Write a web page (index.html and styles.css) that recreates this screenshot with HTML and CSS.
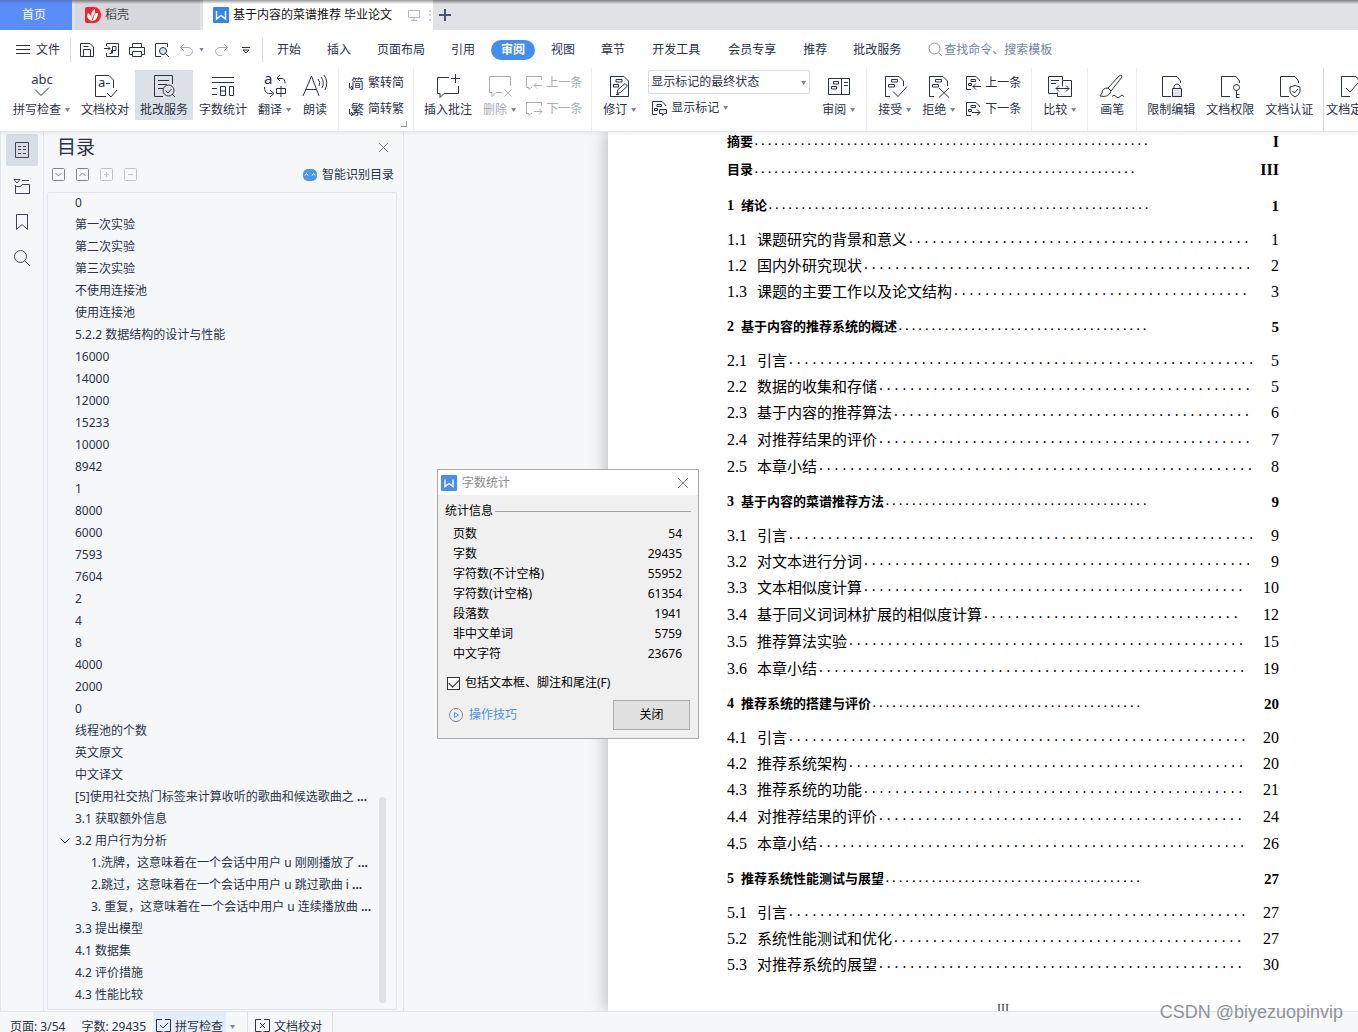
FILE: index.html
```html
<!DOCTYPE html>
<html lang="zh-CN">
<head>
<meta charset="utf-8">
<title>基于内容的菜谱推荐 毕业论文</title>
<link rel="stylesheet" href="styles.css">
</head>
<body>
<svg class="defs" aria-hidden="true">
  <symbol id="i-change" viewBox="0 0 16 16"><path d="M6 14.500H1.500V1.500H11L14.500 5V6M6 4.500h4.500v2H6zM3.500 8.500h3v2h-3z"/></symbol>
  <symbol id="i-bigchange" viewBox="0 0 24 24"><path d="M8 22.500H3.500V2.500H17L21.500 7V12M9.500 5.500h6v2.500h-6zM6.500 10.500h6v2.500h-6z"/></symbol>
  <symbol id="i-page" viewBox="0 0 24 24"><path d="M12 22.500H3.500V2.500H18L21.500 7V9"/></symbol>
</svg>

<header class="tabs">
  <button class="tab tab-home">首页</button>
  <button class="tab tab-docer"><svg width="16" height="16" viewBox="0 0 16 16"><path d="M2 0h7a7 8 0 0 1 0 16H2q-2 0-2-2V2Q0 0 2 0z" fill="#f5222d"/><path d="M7 14C1 12 2 8 3 6c2 1 3 3 4 5C5 6 8 3 10 2c0 2 0 4-1 6 1-2 2-2 4-2 0 4-2 8-6 8z" fill="#fff"/><path d="M7.500 13Q8 9 9.500 7.500" fill="none" stroke="#f5222d"/></svg>稻壳</button>
  <button class="tab tab-doc"><svg width="16" height="16" viewBox="0 0 16 16"><rect width="16" height="16" rx="1" fill="#3385f5"/><path d="M3.500 4v8L8 8.500l4.500 3.500V4" fill="none" stroke="#fff" stroke-width="1.400"/></svg><span class="doc-name">基于内容的菜谱推荐 毕业论文</span><svg class="line pale" width="12" height="12" viewBox="0 0 12 12"><path d="M.5 1.500h11v7H.5zM6 8.500v3M3 11.500h6"/></svg><span class="tab-dots">⋮</span></button>
  <button class="add" aria-label="新建"><svg width="12" height="12" viewBox="0 0 12 12"><path d="M6 0v12M0 6h12" stroke="#46536b" stroke-width="2"/></svg></button>
</header>

<div class="menubar">
  <button class="file"><svg class="line" width="14" height="12" viewBox="0 0 14 12"><path d="M0 1.500h14M0 5.500h14M0 9.500h14"/></svg>文件</button>
  <div class="quick">
    <button aria-label="保存"><svg class="line" width="16" height="16" viewBox="0 0 16 16"><path d="M1.500 1.500H11L14.500 5V14.500H1.500zM4.500 14V7.500h7V14M4.500 4.500h5"/></svg></button>
    <button aria-label="输出为PDF"><svg class="line" width="16" height="16" viewBox="0 0 16 16"><path d="M2.500 4V1.500h12v13h-12V11M0 6.500h6M4 4.500l2 2-2 2M8.500 4.500H12v4H7.500v3H5.500M8.500 4.500v7"/></svg></button>
    <button aria-label="打印"><svg class="line" width="16" height="16" viewBox="0 0 16 16"><path d="M3.500 5V1.500h9V5M3.500 12.500h-3v-7h15v7h-3M3.500 9.500h9v5h-9z"/></svg></button>
    <button aria-label="打印预览"><svg class="line" width="16" height="16" viewBox="0 0 16 16"><path d="M7 14.500H1.500V1.500h12V5"/><circle cx="9" cy="9" r="3.500" fill="#dfe3e8"/><path d="M12 12l3 3"/></svg></button>
    <button aria-label="撤销" class="off"><svg class="line" width="16" height="16" viewBox="0 0 16 16"><path d="M5 2L1.500 5.500 5 9M1.500 5.500H9C15 6 15 13 9 13.500H7"/></svg><i class="caret"></i></button>
    <button aria-label="恢复" class="off"><svg class="line" width="16" height="16" viewBox="0 0 16 16"><path d="M11 2l3.500 3.500L11 9M14.500 5.500H7C1 6 1 13 7 13.500h2"/></svg></button>
    <button aria-label="更多"><svg class="line" width="10" height="8" viewBox="0 0 10 8"><path d="M1 1.500h8M2 4l3 3 3-3z"/></svg></button>
  </div>
  <nav class="menu">
    <button>开始</button><button>插入</button><button>页面布局</button><button>引用</button><button class="current">审阅</button><button>视图</button><button>章节</button><button class="roomy">开发工具</button><button class="roomy">会员专享</button><button>推荐</button><button>批改服务</button>
  </nav>
  <label class="find"><svg class="line" width="15" height="15" viewBox="0 0 15 15"><circle cx="6.500" cy="6.500" r="5.500"/><path d="M10.500 10.500L14 14"/></svg><input type="text" placeholder="查找命令、搜索模板"></label>
</div>

<div class="ribbon">
  <div class="group tight">
    <button class="tool"><svg class="line" width="24" height="24" viewBox="0 0 24 24"><text x="12" y="10" text-anchor="middle" class="glyph">abc</text><path d="M5 15.500l6 6 8-8"/></svg><span>拼写检查<i class="caret"></i></span></button>
    <button class="tool"><svg class="line" width="24" height="24" viewBox="0 0 24 24"><path d="M13 22.500H2.500V1.500H16L20.500 6V14M13 9.500h4M14 19l4 4 6-7"/><text x="5" y="13" class="glyph">a</text></svg><span>文档校对</span></button>
    <button class="tool pressed"><svg class="line" width="24" height="24" viewBox="0 0 24 24"><path d="M11 22.500H2.500V1.500h18V10M6 6.500h11M6 10.500h9M6 14.500h5M13.500 16.500l2.500 2.500 3.500-4M20 20l3 3"/><circle cx="16.500" cy="16.500" r="5.500"/></svg><span>批改服务</span></button>
    <button class="tool"><svg class="line" width="24" height="24" viewBox="0 0 24 24"><path d="M1 3.500h22M1 8.500h22M1 14.500h5M1 20.500h5M9.500 12.500h5v9h-5zM18.500 12.500h4v9h-4zM9.500 17h5"/></svg><span>字数统计</span></button>
    <button class="tool"><svg class="line" width="24" height="24" viewBox="0 0 24 24"><text x="1" y="10" class="glyph big">a</text><path d="M17 1l-3 3 3 3M14 4.500h5q3 0 3 5M1.500 13q0 6 4 6.500h4M7 16l4 3.500L7 23M13.500 14.500h9v5h-9zM18 12v11"/></svg><span>翻译<i class="caret"></i></span></button>
    <button class="tool"><svg class="line" width="26" height="24" viewBox="0 0 26 24"><path d="M1 22L9.500 2 17 22M4 15.500h10M16 5q3 3 1 7M19 3q4 5 1 11M22 1q5 7 1 15"/></svg><span>朗读</span></button>
  </div>
  <div class="group tight corner">
    <div class="stack">
      <button class="mini"><svg class="line" width="16" height="16" viewBox="0 0 16 16"><text x="3" y="13" class="glyph">简</text><path d="M1.500 8v5H5M3 11l2 2-2 2"/></svg>繁转简</button>
      <button class="mini"><svg class="line" width="16" height="16" viewBox="0 0 16 16"><text x="3" y="13" class="glyph">繁</text><path d="M1.500 8v5H5M3 11l2 2-2 2"/></svg>简转繁</button>
    </div>
  </div>
  <div class="group tight">
    <button class="tool"><svg class="line" width="24" height="24" viewBox="0 0 24 24"><path d="M13 3.500H1.500v16H4v4l4-4h14.500V12M19.500 0v9M15 4.500h9"/></svg><span>插入批注</span></button>
    <button class="tool off"><svg class="line" width="24" height="24" viewBox="0 0 24 24"><path d="M14 18.500H8l-4 4v-4H1.500v-16h21V12M16.500 15.500l7 7M23.500 15.500l-7 7"/></svg><span>删除<i class="caret"></i></span></button>
    <div class="stack">
      <button class="mini off"><svg class="line" width="16" height="16" viewBox="0 0 16 16"><path d="M6 12.500H5l-2 2v-2H.5v-11h15V5M8 10.500h8M11 7.500l-3 3 3 3"/></svg>上一条</button>
      <button class="mini off"><svg class="line" width="16" height="16" viewBox="0 0 16 16"><path d="M6 12.500H5l-2 2v-2H.5v-11h15V5M8 10.500h8M13 7.500l3 3-3 3"/></svg>下一条</button>
    </div>
  </div>
  <div class="group">
    <button class="tool"><svg class="line" width="24" height="24" viewBox="0 0 24 24"><path d="M2.500 2.500H16L20.500 7V22.500h-18zM8 5.500h6V8H8zM5.500 10.500h5V13h-5zM9 19.500l1-4 7-6 2.500 2.500-7 6.500zM8 20.500h3"/></svg><span>修订<i class="caret"></i></span></button>
    <div class="stack markup">
      <label class="pick"><select aria-label="显示状态"><option>显示标记的最终状态</option></select><i class="caret"></i></label>
      <button class="mini"><svg class="line" width="16" height="16"><use href="#i-change"/><path d="M8.500 9.500h7v4h-2l-2 2v-2h-3z" fill="#dfe3e8"/></svg>显示标记<i class="caret"></i></button>
    </div>
    <button class="tool"><svg class="line" width="24" height="24" viewBox="0 0 24 24"><path d="M1.500 4.500h21v16h-21zM14.500 4.500v16M17 8.500h4M17 11.500h4M6.500 7.500h5V10h-5zM4.500 12.500h5V15h-5z"/></svg><span>审阅<i class="caret"></i></span></button>
  </div>
  <div class="group">
    <button class="tool"><svg class="line" width="26" height="24"><use href="#i-bigchange" width="24" height="24"/><path d="M11 17.500l5 5 9-10"/></svg><span>接受<i class="caret"></i></span></button>
    <button class="tool"><svg class="line" width="26" height="24"><use href="#i-bigchange" width="24" height="24"/><path d="M13 14l10 9.500M23 14l-10 9.500"/></svg><span>拒绝<i class="caret"></i></span></button>
    <div class="stack">
      <button class="mini"><svg class="line" width="16" height="16"><use href="#i-change"/><path d="M8 11.500h8M11 8.500l-3 3 3 3"/></svg>上一条</button>
      <button class="mini"><svg class="line" width="16" height="16"><use href="#i-change"/><path d="M7 11.500h8M12 8.500l3 3-3 3"/></svg>下一条</button>
    </div>
  </div>
  <div class="group">
    <button class="tool"><svg class="line" width="26" height="24" viewBox="0 0 26 24"><path d="M11 19.500H1.500v-17h14V6M4 6.500h8M4 9.500h5M15.500 6.500h9v16h-14v-4M15.500 6.500v6M9 14.500h13M12 11.500l-3 3 3 3M19 11.500l3 3-3 3"/></svg><span>比较<i class="caret"></i></span></button>
  </div>
  <div class="group">
    <button class="tool"><svg class="line" width="26" height="24" viewBox="0 0 26 24"><path d="M9 14L20 2q3-2 3 1L12 17M9 14l3 3M9 14q-6 0-6 5l-2 3q9 2 11-5M13 22.500q2-3 4 0t4 0 4 0"/></svg><span>画笔</span></button>
  </div>
  <div class="group tight">
    <button class="tool"><svg class="line" width="24" height="24"><use href="#i-page"/><path d="M13.500 14.500h9v8h-9z" fill="#dfe3e8"/><path d="M15 14v-2q3-4 6 0v2"/></svg><span>限制编辑</span></button>
    <button class="tool"><svg class="line" width="24" height="24"><use href="#i-page"/><circle cx="18.500" cy="13.500" r="3"/><path d="M18.500 17v7M18.500 20.500h3M18.500 23.500h3"/></svg><span>文档权限</span></button>
    <button class="tool"><svg class="line" width="24" height="24"><use href="#i-page"/><path d="M18 11.500l5 1.500v5q-1 3-5 5-4-2-5-5v-5zM15.500 17l2 2 3.500-4"/></svg><span>文档认证</span></button>
  </div>
  <div class="group last">
    <button class="tool"><svg class="line" width="24" height="24"><use href="#i-page"/><path d="M8 14l4 4 8-9"/></svg><span class="cut">文档定</span></button>
  </div>
</div>

<main class="work">
  <nav class="rail">
    <button class="on" aria-label="目录"><svg class="line" width="16" height="16" viewBox="0 0 16 16"><path d="M1.500.5h13v15h-13zM4 4.500h3M9 4.500h3M4 7.500h3M9 7.500h3M4 11.500h3M9 11.500h3"/></svg></button>
    <button aria-label="章节"><svg class="line" width="18" height="16" viewBox="0 0 18 16"><path d="M1 1.500h6L4 5zM9 2.500h7M2.500 7v8.500h14v-9H9L7.500 8.500h-5"/></svg></button>
    <button aria-label="书签"><svg class="line" width="12" height="18" viewBox="0 0 12 18"><path d="M.5 1.500h11v15L6 11.500.5 16.500z"/></svg></button>
    <button aria-label="查找"><svg class="line" width="18" height="18" viewBox="0 0 18 18"><circle cx="7.500" cy="7.500" r="6"/><path d="M12 12l5 5"/></svg></button>
  </nav>

  <section class="outline">
    <div class="outline-head"><h2>目录</h2><button aria-label="关闭目录"><svg class="line grey" width="11" height="11" viewBox="0 0 11 11"><path d="M1 1l9 9M10 1l-9 9"/></svg></button></div>
    <div class="outline-tools">
      <button aria-label="展开"><svg class="line grey" width="13" height="13" viewBox="0 0 13 13"><rect x=".5" y=".5" width="12" height="12" rx="1"/><path d="M3.500 5l3 3 3-3"/></svg></button>
      <button aria-label="收起"><svg class="line grey" width="13" height="13" viewBox="0 0 13 13"><rect x=".5" y=".5" width="12" height="12" rx="1"/><path d="M3.500 8l3-3 3 3"/></svg></button>
      <button aria-label="提升"><svg class="line faint" width="13" height="13" viewBox="0 0 13 13"><rect x=".5" y=".5" width="12" height="12" rx="1"/><path d="M4 6.500h5M6.500 4v5"/></svg></button>
      <button aria-label="降低"><svg class="line faint" width="13" height="13" viewBox="0 0 13 13"><rect x=".5" y=".5" width="12" height="12" rx="1"/><path d="M4 6.500h5"/></svg></button>
      <button class="smart"><svg width="14" height="12" viewBox="0 0 14 12"><rect width="14" height="12" rx="5" fill="#4a97f2"/><path d="M2 6.500l1.500-2L5 6.500M9 6.500l1.500-2 1.500 2" fill="none" stroke="#fff"/></svg>智能识别目录</button>
    </div>
    <div class="outline-box">
      <ul class="outline-list">
        <li>0</li><li>第一次实验</li><li>第二次实验</li><li>第三次实验</li><li>不使用连接池</li><li>使用连接池</li><li>5.2.2 数据结构的设计与性能</li>
        <li>16000</li><li>14000</li><li>12000</li><li>15233</li><li>10000</li><li>8942</li><li>1</li><li>8000</li><li>6000</li><li>7593</li><li>7604</li><li>2</li><li>4</li><li>8</li><li>4000</li><li>2000</li><li>0</li>
        <li>线程池的个数</li><li>英文原文</li><li>中文译文</li>
        <li>[5]使用社交热门标签来计算收听的歌曲和候选歌曲之 <b>...</b></li>
        <li>3.1 获取额外信息</li>
        <li class="open"><svg class="line" width="10" height="6" viewBox="0 0 10 6"><path d="M.5.5L5 5 9.500.5"/></svg>3.2 用户行为分析</li>
        <li class="deep">1.洗牌，这意味着在一个会话中用户 u 刚刚播放了 <b>...</b></li>
        <li class="deep">2.跳过，这意味着在一个会话中用户 u 跳过歌曲 i <b>...</b></li>
        <li class="deep">3. 重复，这意味着在一个会话中用户 u 连续播放曲 <b>...</b></li>
        <li>3.3 提出模型</li><li>4.1 数据集</li><li>4.2 评价措施</li><li>4.3 性能比较</li>
      </ul>
      <div class="scroll"></div>
    </div>
  </section>

  <section class="canvas">
    <article class="paper">
      <div class="toc" id="toc"></div>
      <p class="folio">III</p>
    </article>
  </section>
</main>

<footer class="status">
  <span>页面: 3/54</span><span>字数: 29435</span>
  <button class="hot"><svg class="line" width="15" height="14" viewBox="0 0 15 14"><path d="M6 .5H.5v12h5l2 1 2-1h5V.5H9M4 6l3 3 5-5"/></svg>拼写检查</button><i class="caret"></i>
  <button class="proof"><svg class="line" width="15" height="14" viewBox="0 0 15 14"><path d="M6 .5H.5v12h5l2 1 2-1h5V.5H9M5 4l5 5M10 4l-5 5"/></svg>文档校对</button>
</footer>

<div class="dialog" role="dialog" aria-labelledby="dlg-title">
  <div class="dialog-bar"><svg width="16" height="16" viewBox="0 0 16 16"><rect width="16" height="16" rx="1" fill="#4a8ff0"/><path d="M4 4.500v7L8 8.500l4 3v-7" fill="none" stroke="#fff" stroke-width="1.400"/></svg><span id="dlg-title">字数统计</span><button aria-label="关闭窗口"><svg class="line grey" width="12" height="12" viewBox="0 0 12 12"><path d="M1 1l10 10M11 1L1 11"/></svg></button></div>
  <div class="dialog-body">
    <div class="legend">统计信息</div>
    <table>
      <tr><th scope="row">页数</th><td>54</td></tr>
      <tr><th scope="row">字数</th><td>29435</td></tr>
      <tr><th scope="row">字符数(不计空格)</th><td>55952</td></tr>
      <tr><th scope="row">字符数(计空格)</th><td>61354</td></tr>
      <tr><th scope="row">段落数</th><td>1941</td></tr>
      <tr><th scope="row">非中文单词</th><td>5759</td></tr>
      <tr><th scope="row">中文字符</th><td>23676</td></tr>
    </table>
    <label class="check"><input type="checkbox" checked>包括文本框、脚注和尾注(F)</label>
    <div class="dialog-foot">
      <a href="#tips"><svg width="14" height="14" viewBox="0 0 14 14" fill="none"><circle cx="7" cy="7" r="6.500" stroke="#7a8698"/><path d="M5.500 4.500v5L9.500 7z" stroke="#4a8ff0"/></svg>操作技巧</a>
      <button class="ok">关闭</button>
    </div>
  </div>
</div>

<div class="watermark">CSDN @biyezuopinvip</div>
<script src="toc.js"></script>
</body>
</html>
```
FILE: toc.js
```js
// Each entry: number, title, leader length in dots, page.
const front = [
  ["摘要", 60, "I"],
  ["目录", 58, "III"]
];
const chapters = [
  [["1", "绪论", 58, "1"],
   ["1.1", "课题研究的背景和意义", 44, "1"],
   ["1.2", "国内外研究现状", 50, "2"],
   ["1.3", "课题的主要工作以及论文结构", 38, "3"]],
  [["2", "基于内容的推荐系统的概述", 38, "5"],
   ["2.1", "引言", 60, "5"],
   ["2.2", "数据的收集和存储", 48, "5"],
   ["2.3", "基于内容的推荐算法", 46, "6"],
   ["2.4", "对推荐结果的评价", 48, "7"],
   ["2.5", "本章小结", 56, "8"]],
  [["3", "基于内容的菜谱推荐方法", 40, "9"],
   ["3.1", "引言", 60, "9"],
   ["3.2", "对文本进行分词", 50, "9"],
   ["3.3", "文本相似度计算", 49, "10"],
   ["3.4", "基于同义词词林扩展的相似度计算", 33, "12"],
   ["3.5", "推荐算法实验", 51, "15"],
   ["3.6", "本章小结", 55, "19"]],
  [["4", "推荐系统的搭建与评价", 41, "20"],
   ["4.1", "引言", 59, "20"],
   ["4.2", "推荐系统架构", 51, "20"],
   ["4.3", "推荐系统的功能", 49, "21"],
   ["4.4", "对推荐结果的评价", 47, "24"],
   ["4.5", "本章小结", 55, "26"]],
  [["5", "推荐系统性能测试与展望", 39, "27"],
   ["5.1", "引言", 59, "27"],
   ["5.2", "系统性能测试和优化", 45, "27"],
   ["5.3", "对推荐系统的展望", 47, "30"]]
];

function cell(cls, text) {
  const el = document.createElement("span");
  el.className = cls;
  el.textContent = text;
  return el;
}

function row(kind, num, title, dots, page) {
  const el = document.createElement("div");
  el.className = "row " + kind;
  if (num) el.append(cell("num", num));
  el.append(cell("title", title), cell("dots", ".".repeat(dots)), cell("page", page));
  return el;
}

const toc = document.getElementById("toc");
front.forEach(([title, dots, page]) => toc.append(row("front", "", title, dots, page)));
chapters.forEach(entries => {
  const block = document.createElement("div");
  entries.forEach((e, i) => block.append(row(i ? "sub" : "chapter", ...e)));
  toc.append(block);
});
```
FILE: styles.css
```css
* { box-sizing: border-box; }
html, body { height: 100%; margin: 0; }
body {
  display: flex;
  flex-direction: column;
  overflow: hidden;
  position: relative;
  background: #f5f7f9;
  color: #2b3245;
  font: 12px/16px "Noto Sans", "Noto Sans CJK SC", sans-serif;
}
button, input, select { font: inherit; color: inherit; }
button { display: flex; align-items: center; border: 0; padding: 0; background: none; white-space: nowrap; }
.defs { position: absolute; width: 0; height: 0; }
.line { fill: none; stroke: currentColor; stroke-width: 1; flex: none; overflow: visible; }
.grey { color: #7c8391; }
.faint { color: #bfc3ca; }
.pale { color: #aeb6cc; }
.glyph { font-size: 13px; fill: currentColor; stroke: none; }
.glyph.big { font-size: 15px; }
.caret { flex: none; width: 5px; height: 4px; background: #7b8499; clip-path: polygon(0 0, 100% 0, 50% 100%); }
.off { color: #a9adb5; }

/* document tabs */
.tabs { display: flex; flex: none; height: 30px; background: linear-gradient(#7d7d80, #e1e2e6 4px); }
.tab { gap: 5px; }
.tab-home { width: 72px; justify-content: center; margin-right: 3px; padding-right: 4px; background: linear-gradient(#5076cc, #5b8df8 4px); color: #fff; }
.tab-docer { width: 125px; margin-right: 3px; padding-left: 10px; gap: 4px; background: linear-gradient(#7d7d80, #d7d8dc 4px); color: #444; }
.tab-doc { width: 230px; padding-left: 10px; gap: 4px; background: linear-gradient(#9a9a9a, #fff 4px); color: #111; }
.tab-doc svg { flex: none; }
.doc-name { margin-right: 12px; }
.tab-dots { width: 2px; overflow: visible; color: #aeb6cc; }
.add { padding: 0 6px; }

/* menu bar */
.menubar { display: flex; flex: none; align-items: center; height: 38px; padding-top: 1px; background: #fff; }
.file { gap: 6px; height: 24px; padding: 0 10px 0 16px; border-right: 1px solid #dfe1e6; }
.quick { display: flex; align-items: center; gap: 9px; height: 24px; padding: 0 8px; border-right: 1px solid #dfe1e6; }
.quick .caret { margin-left: 4px; }
.quick button:last-child { padding: 0 3px; }
.menu { display: flex; align-items: center; gap: 26px; margin-left: 14px; }
.menu button { height: 20px; }
.menu .current { margin: 0 -10px; padding: 0 10px; border-radius: 10px; background: #438df0; color: #fff; font-weight: 700; }
.menu .roomy { padding: 0 1px; }
.find { display: flex; align-items: center; gap: 1px; margin-left: 27px; color: #8490aa; }
.find input { width: 130px; border: 0; padding: 0; outline: 0; background: none; }
.find input::placeholder { color: #75829e; opacity: 1; }

/* ribbon */
.ribbon { display: flex; flex: none; height: 64px; padding-left: 3px; overflow: hidden; background: #fff; border-bottom: 1px solid #e4e6ea; box-shadow: 0 2px 3px #0000000d; position: relative; }
.group { display: flex; flex: none; gap: 1px; padding: 0 6px; border-right: 1px solid #eceef1; }
.group.tight { padding: 0 5px; }
.group:nth-last-child(2) { border-color: #d5d8df; }
.corner { position: relative; }
.corner::after { content: ""; position: absolute; right: 6px; bottom: 4px; width: 5px; height: 5px; border: solid #98a0b0; border-width: 0 1px 1px 0; }
.group.last { border: 0; padding: 0; }
.tool { flex-direction: column; gap: 4px; height: 50px; margin-top: 2px; padding: 4px 5px 0; }
.tool > span { display: flex; align-items: center; gap: 4px; }
.pressed { background: #dbe1e6; }
.tool > .cut { width: 48px; }
.group.last .tool { padding-left: 2px; }
.stack { display: flex; flex-direction: column; gap: 2px; padding: 3px 1px 0; }
.mini { gap: 4px; height: 24px; padding: 0 3px; }
.stack.markup { padding: 2px 6px 0; }
.pick { position: relative; display: flex; }
.pick .caret { position: absolute; right: 4px; top: 11px; }
.pick select { appearance: none; width: 162px; height: 24px; padding: 0 2px; border: 1px solid #d8dbe0; border-radius: 2px; background: #fff; }

/* workspace */
.work { display: flex; flex: 1; min-height: 0; }
.rail { display: flex; flex: none; flex-direction: column; gap: 4px; width: 44px; padding: 2px 5px; border: solid #e1e4ea; border-width: 0 1px; }
.rail button { justify-content: center; width: 32px; height: 32px; border-radius: 2px; color: #3a4560; }
.rail .on { background: #d8dde4; }
.outline { display: flex; flex: none; flex-direction: column; width: 360px; padding: 0 6px 1px 3px; border-right: 1px solid #e1e4ea; }
.outline-head { display: flex; justify-content: space-between; align-items: center; height: 30px; padding: 0 8px 0 10px; }
.outline-head h2 { margin: 0; font-size: 19px; line-height: 28px; font-weight: 400; }
.outline-tools { display: flex; gap: 11px; height: 24px; padding: 0 3px 0 5px; }
.outline-tools .smart { gap: 5px; margin-left: auto; padding-top: 1px; }
.outline-box { display: flex; flex: 1; min-height: 0; margin-top: 6px; border: 1px solid #e1e4ea; border-radius: 2px; }
.outline-list { flex: 1; min-width: 0; margin: 0; padding: 0 0 0 27px; list-style: none; }
.outline-list li { height: 22px; line-height: 19px; white-space: nowrap; }
.outline-list .deep { padding-left: 16px; }
.outline-list .open { display: flex; align-items: center; gap: 5px; margin-left: -15px; padding-bottom: 3px; }
.scroll { flex: none; align-self: flex-end; width: 7px; height: 206px; margin: 0 10px 6px 0; border-radius: 4px; background: #dfe3e6; }

/* page */
.canvas { flex: 1; min-width: 0; overflow: hidden; padding-left: 204px; }
.paper { display: flow-root; height: 100%; padding-left: 119px; background: #fff; color: #000; box-shadow: -2px 0 16px #00000040; }
.toc { width: 552px; margin-top: -4px; font: 16px/20px "Liberation Serif", "Noto Sans CJK SC", serif; }
.row { display: flex; align-items: center; height: 26px; white-space: nowrap; }
.front { height: 28px; font-weight: 700; }
.chapter { height: 43px; font-weight: 700; }
.sub:nth-child(n+5) { height: 27px; }
.title { font-size: 15px; }
.front .title, .chapter .title { font-size: 13px; }
.num { width: 30px; }
.chapter .num { width: 14px; font-size: 14px; }
.dots { font-family: "Liberation Mono", monospace; font-size: 13px; }
.front .dots, .chapter .dots { font-size: 11px; }
.page { margin-left: auto; }
.chapter .page { font-size: 15px; }
.folio { width: 552px; margin: 24px 0 0; font: 12px/12px "Liberation Serif", serif; text-align: center; color: #333; }

/* status bar */
.status { display: flex; flex: none; height: 21px; align-items: flex-start; padding-left: 10px; border-top: 1px solid #e1e4ea; background: #f5f7f9; }
.status > * { height: 28px; line-height: 29px; }
.status span { padding-right: 16px; }
.status button { gap: 4px; padding: 0 3px; }
.status .hot { margin-left: -9px; background: #e4eefb; }
.status .caret { height: 4px; margin: 13px 12px 0 4px; }
.status .proof { border: solid #dfe1e6; border-width: 0 1px; padding: 0 10px 0 7px; }

/* word-count window */
.dialog { position: absolute; left: 437px; top: 469px; width: 262px; border: 1px solid #a9a9a9; background: #f0f0f0; color: #000; }
.dialog-bar { display: flex; align-items: center; gap: 5px; height: 25px; padding: 0 9px 0 3px; background: #fff; color: #8b8b8b; }
.dialog-bar button { margin-left: auto; }
.dialog-body { padding: 8px 7px; }
.legend { display: flex; align-items: center; gap: 2px; }
.legend::after { content: ""; flex: 1; height: 1px; background: #a0a0a0; }
.dialog table { width: 100%; margin-top: 5px; border-collapse: collapse; }
.dialog th, .dialog td { height: 20px; padding: 0 9px 0 8px; font-weight: 400; text-align: left; line-height: 20px; }
.dialog td { text-align: right; }
.check { display: flex; align-items: center; gap: 5px; margin: 11px 2px 9px; }
.check input { appearance: none; width: 13px; height: 13px; margin: 0; border: 1px solid #333; background: #fff; display: grid; place-items: center; }
.check input:checked::before { content: ""; width: 9px; height: 5px; border: solid #222; border-width: 0 0 1px 1px; transform: rotate(-45deg); margin-bottom: 3px; }
.dialog-foot { display: flex; align-items: center; justify-content: space-between; padding-left: 4px; }
.dialog-foot a { display: flex; align-items: center; gap: 6px; color: #4a8ff0; text-decoration: none; }
.ok { justify-content: center; width: 77px; height: 30px; margin-right: 1px; border: 1px solid #adadad; background: #e1e1e1; }

.watermark { position: absolute; right: 15px; bottom: 10px; font: 18px/20px "Liberation Sans", sans-serif; color: #909398; }
```
